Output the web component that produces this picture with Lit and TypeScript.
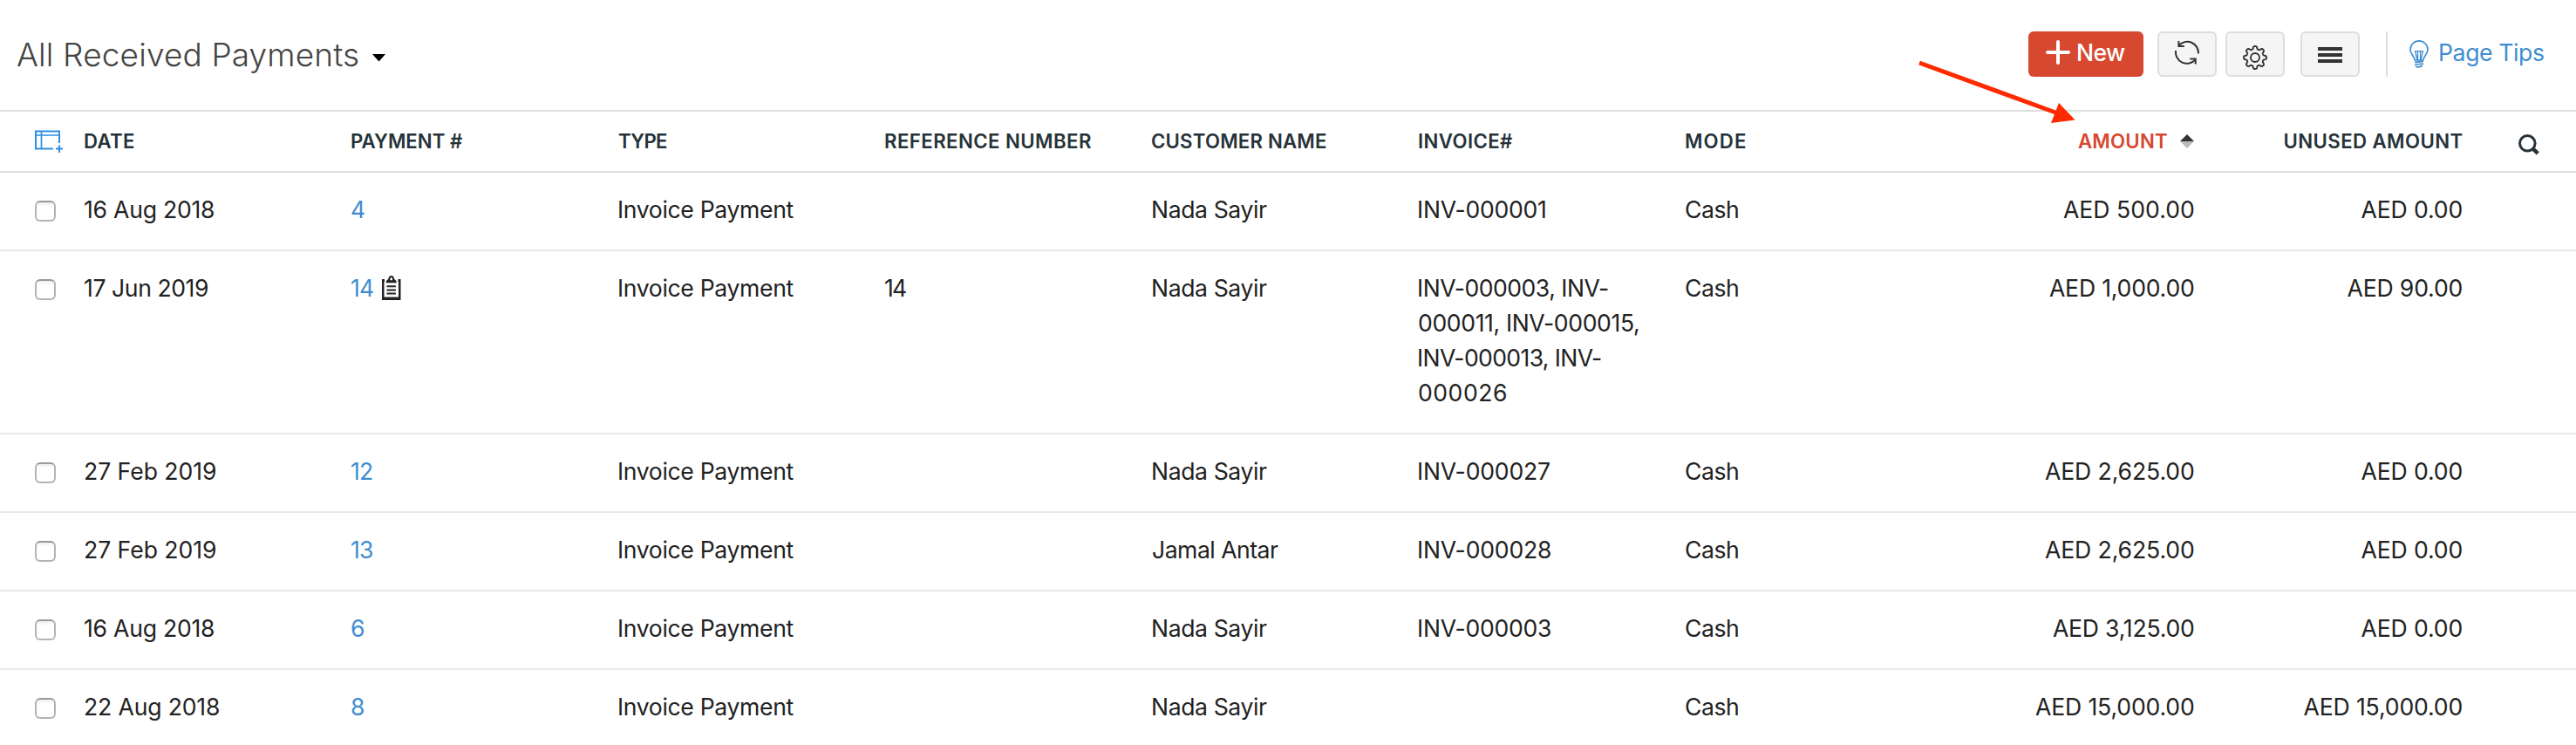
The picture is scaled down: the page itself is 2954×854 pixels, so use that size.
import { LitElement, html, css, svg } from "lit";
import { customElement, property } from "lit/decorators.js";

const ctx = document.createElement("canvas").getContext("2d")!;

/** One line of text, tracked so that its ink spans exactly `w` pixels. */
@customElement("fit-text")
class FitText extends LitElement {
  @property() text = "";
  @property({ type: Number }) w = 0;
  @property() align = "left";
  static styles = css`
    :host { display: block; white-space: pre; }
  `;
  render() {
    return html`${this.text}`;
  }
  updated() {
    const cs = getComputedStyle(this);
    ctx.font = `${cs.fontWeight} ${cs.fontSize} ${cs.fontFamily}`;
    const m = ctx.measureText(this.text);
    const left = -m.actualBoundingBoxLeft;
    const ink = m.actualBoundingBoxRight - left;
    const n = this.text.length - 1;
    const ls = n > 0 ? (this.w - ink) / n : 0;
    this.style.letterSpacing = `${ls.toFixed(3)}px`;
    if (this.align === "right") {
      this.style.marginRight = `${(-ls - (m.width - m.actualBoundingBoxRight)).toFixed(2)}px`;
    } else {
      this.style.marginLeft = `${(-left).toFixed(2)}px`;
    }
  }
}

type T = [string, number];
interface Row {
  date: T; no: T; note?: boolean; type: T; ref?: T; name: T; inv: T[]; mode: T; amount: T; unused: T;
}
const TYPE: T = ["Invoice Payment", 200.5];
const NADA: T = ["Nada Sayir", 131];
const CASH: T = ["Cash", 60];
const ZERO: T = ["AED 0.00", 116];
const rows: Row[] = [
  { date: ["16 Aug 2018", 148], no: ["4", 15], type: TYPE, name: NADA, inv: [["INV-000001", 145]], mode: CASH, amount: ["AED 500.00", 150], unused: ZERO },
  { date: ["17 Jun 2019", 141], no: ["14", 25], note: true, type: TYPE, ref: ["14", 24], name: NADA,
    inv: [["INV-000003, INV-", 217], ["000011, INV-000015,", 252], ["INV-000013, INV-", 209], ["000026", 100]],
    mode: CASH, amount: ["AED 1,000.00", 166], unused: ["AED 90.00", 132] },
  { date: ["27 Feb 2019", 150], no: ["12", 24], type: TYPE, name: NADA, inv: [["INV-000027", 150]], mode: CASH, amount: ["AED 2,625.00", 171], unused: ZERO },
  { date: ["27 Feb 2019", 150], no: ["13", 24], type: TYPE, name: ["Jamal Antar", 144], inv: [["INV-000028", 151]], mode: CASH, amount: ["AED 2,625.00", 171], unused: ZERO },
  { date: ["16 Aug 2018", 148], no: ["6", 15], type: TYPE, name: NADA, inv: [["INV-000003", 151]], mode: CASH, amount: ["AED 3,125.00", 162], unused: ZERO },
  { date: ["22 Aug 2018", 154], no: ["8", 15], type: TYPE, name: NADA, inv: [], mode: CASH, amount: ["AED 15,000.00", 182], unused: ["AED 15,000.00", 182] },
];
const heads: T[] = [["DATE", 57], ["PAYMENT #", 127], ["TYPE", 56], ["REFERENCE NUMBER", 236], ["CUSTOMER NAME", 200], ["INVOICE#", 107], ["MODE", 69]];

const t = (x?: T, align = "left") => (x ? html`<fit-text .text=${x[0]} .w=${x[1]} .align=${align}></fit-text>` : "");

function gearPath() {
  const pts: string[] = [];
  for (let i = 0; i <= 160; i++) {
    const a = (i / 160) * Math.PI * 2;
    const r = 11.4 + 1.6 * Math.tanh(2.2 * Math.cos(8 * a));
    pts.push(`${(14 + r * Math.sin(a)).toFixed(2)} ${(14 - r * Math.cos(a)).toFixed(2)}`);
  }
  return "M" + pts.join("L") + "Z";
}

const ic = {
  plus: svg`<path d="M14 2v24M2 14h24" fill="none" stroke="#fff" stroke-width="4" stroke-linecap="round"/>`,
  refresh: svg`<g fill="none" stroke="#333" stroke-width="2"><path d="M4.6 6.2A12.7 12.7 0 0 1 26.9 15.5M1.1 12A12.9 12.9 0 0 0 23.6 22.4"/><path d="M4.4 1v6h6.3M17.3 21.6h6.4v6"/></g>`,
  gear: svg`<path d=${gearPath()} fill="none" stroke="#333" stroke-width="1.9"/><circle cx="14" cy="14" r="5" fill="none" stroke="#333" stroke-width="1.9"/>`,
  clip: svg`<path d="M3 4H0v24h21.500V4h-3v3h.5v17.500H2.500V7H3z" fill="#222"/><path d="M4.800 8.200V7q0-1.500 1.500-2.300Q7.300 4 7.600 2.400 8.200 0 10.700 0t3.100 2.400Q14.100 4 15.100 4.700q1.500.8 1.500 2.300v1.200zM10.700 2.200a1.300 1.300 0 0 0-1.300 1.300V5.200H12V3.500a1.300 1.300 0 0 0-1.300-1.300z" fill="#222" fill-rule="evenodd"/><path d="M5.500 12.200h10.400M5.500 16.400h10.400M5.500 20.600h10.400" stroke="#222" stroke-width="2"/>`,
  search: svg`<circle cx="10.300" cy="10.300" r="8.800" fill="none" stroke="#263238" stroke-width="3"/><path d="M17 16.800l5.300 5" stroke="#263238" stroke-width="4.500"/>`,
};

@customElement("app-root")
class AppRoot extends LitElement {
  static styles = css`
    :host { display: block; position: relative; width: 2954px; height: 854px; overflow: hidden; background: #fff;
      font: 400 26.6px/40px Inter, "Liberation Sans", sans-serif; color: #222; }
    * { box-sizing: border-box; }
    svg { display: block; flex: none; }
    .bar { display: flex; align-items: flex-start; height: 128px; padding: 36px 36px 0 20px; border-bottom: 2px solid #ddd; }
    .title { font-weight: 300; font-size: 37px; color: #444; line-height: 54px; }
    .caret { margin: 26px 0 0 15px; }
    .grow { flex: 1; }
    .btn { display: flex; justify-content: center; height: 52px; width: 68px; border: 2px solid #ddd; border-radius: 6px; background: #f5f5f5; padding-top: 8px; margin-left: 10px; }
    .btn.new { width: 132px; border: 0; background: #d64830; color: #fff; margin: 0 6px 0 0; padding: 10px 0 0 20px; justify-content: flex-start; font-weight: 500; }
    .new svg { margin-right: 9px; }
    .new fit-text, .tips fit-text { line-height: 28px; }
    .btn.gear { padding-top: 14px; }
    .btn.menu { padding-top: 16px; margin-left: 18px; }
    .sep { width: 2px; height: 52px; background: #ddd; margin: 0 25px 0 30px; }
    .tips { display: flex; color: #408dd0; padding-top: 10px; width: 155px; }
    .tips svg { margin-right: 13px; }
    .row { display: grid; grid-template-columns: 57px repeat(9, 306px) 64px; padding: 22px 0 26px 40px; border-bottom: 2px solid #e8e8e8; }
    .row > div { min-height: 40px; }
    .row .nudge { padding-left: 1px; }
    .row:last-child { border: 0; }
    .row.head { height: 70px; padding: 16px 0 0 40px; border-color: #ddd; font-weight: 600; font-size: 22.2px; color: #263238; line-height: 36px; }
    .cols { margin-top: 5px; }
    .find { margin: 10px 0 0 37px; }
    .row .num { padding-right: 29px; display: flex; justify-content: flex-end; }
    .row .num.last { padding-right: 27.5px; }
    .head .num { gap: 15px; }
    .row .sorted { color: #d64830; }
    .box { width: 24px; height: 24px; margin-top: 10px; border: 2px solid #b4b4b4; border-top-color: #999; border-radius: 6px; background: linear-gradient(#eee, #fff 5px); }
    .no { display: flex; color: #408dd0; }
    .no svg { margin: 6px 0 0 10px; }
    .arrow { position: absolute; left: 2190px; top: 60px; }
  `;
  render() {
    return html`
      <div class="bar">
        <div class="title">${t(["All Received Payments", 391])}</div>
        <svg class="caret" width="15" height="9" viewBox="0 0 15 9"><path d="M0 0h15L7.5 8.5z" fill="#000"/></svg>
        <div class="grow"></div>
        <div class="btn new"><svg width="28" height="28">${ic.plus}</svg>${t(["New", 54])}</div>
        <div class="btn"><svg width="28" height="28">${ic.refresh}</svg></div>
        <div class="btn gear"><svg width="28" height="28">${ic.gear}</svg></div>
        <div class="btn menu"><svg width="28" height="18"><path d="M0 0h28v4H0zM0 7h28v4H0zM0 14h28v4H0z" fill="#333"/></svg></div>
        <div class="sep"></div>
        <div class="tips">
          <svg width="22" height="32" viewBox="0 0 22 32" fill="none" stroke="#408dd0" stroke-width="1.7"><path d="M6.2 23C6.2 18.5 1 16.5 1 10.8a10 10 0 0 1 20 0C21 16.5 15.8 18.5 15.8 23z"/><path d="M9 23L6.600 12.600h8.800L13 23M9.500 13v10M12.500 13v10" stroke-width="1.3"/><path d="M6 25.300l10-.9M6 28l10-.9M7 30.400q4 1.200 8-.8"/></svg>
          ${t(["Page Tips", 119])}
        </div>
      </div>
      <div class="row head">
        <div><svg class="cols" width="32" height="27" viewBox="0 0 32 27" fill="none" stroke="#2b8fe4" stroke-width="2"><path d="M28 15V1.500H1V21.500h20"/><path d="M0 6h28M7.500 2v19" stroke-width="1.700"/><path d="M24 21.500h8M28 17.500v8.500"/></svg></div>
        ${heads.map((h) => html`<div>${t(h)}</div>`)}
        <div class="num sorted">${t(["AMOUNT", 102], "right")}<svg width="16" height="36" viewBox="0 0 16 36"><path d="M0 18L8 10l8 8z" fill="#333"/><path d="M0 18h16l-8 8z" fill="#bbb"/></svg></div>
        <div class="num last">${t(["UNUSED AMOUNT", 204], "right")}</div>
        <div><svg class="find" width="25" height="25">${ic.search}</svg></div>
      </div>
      ${rows.map((r) => html`<div class="row">
        <div><div class="box"></div></div>
        <div>${t(r.date)}</div>
        <div class="no">${t(r.no)}${r.note ? html`<svg width="22" height="28">${ic.clip}</svg>` : ""}</div>
        <div class="nudge">${t(r.type)}</div>
        <div>${t(r.ref)}</div>
        <div class="nudge">${t(r.name)}</div>
        <div>${r.inv.map((i) => t(i))}</div>
        <div>${t(r.mode)}</div>
        <div class="num">${t(r.amount, "right")}</div>
        <div class="num last">${t(r.unused, "right")}</div>
      </div>`)}
      <svg class="arrow" width="200" height="90"><path d="M11 12L170 70" stroke="#ff2a00" stroke-width="5"/><path d="M189.500 77.500L171 58l-9 23z" fill="#ff2a00"/></svg>
    `;
  }
}
